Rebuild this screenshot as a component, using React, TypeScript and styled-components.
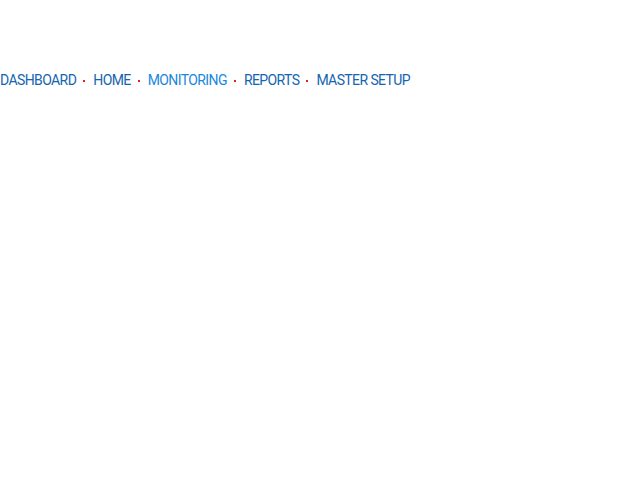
import React from "react";
import styled, { createGlobalStyle } from "styled-components";

const Global = createGlobalStyle`
  html, body { margin: 0; padding: 0; background: #fff; }
`;

const Nav = styled.nav`
  display: flex;
  align-items: center;
  padding-top: 72px;
  font-family: Roboto, "Liberation Sans", sans-serif;
  font-size: 14px;
  line-height: 16px;
  letter-spacing: -0.6px;
`;

const Item = styled.a<{ $active?: boolean }>`
  color: ${(p) => (p.$active ? "#1a88dc" : "#1464b0")};
  text-decoration: none;
  text-transform: uppercase;
`;

const Sep = styled.span`
  display: inline-block;
  width: 2px;
  height: 2px;
  background: #e8201a;
  margin: 2px 8px 0 7px;
`;

const items = ["Dashboard", "Home", "Monitoring", "Reports", "Master Setup"];

export default function App() {
  return (
    <>
      <Global />
      <Nav>
        {items.map((t, i) => (
          <React.Fragment key={t}>
            {i > 0 && <Sep />}
            <Item href="#" $active={t === "Monitoring"}>{t}</Item>
          </React.Fragment>
        ))}
      </Nav>
    </>
  );
}
